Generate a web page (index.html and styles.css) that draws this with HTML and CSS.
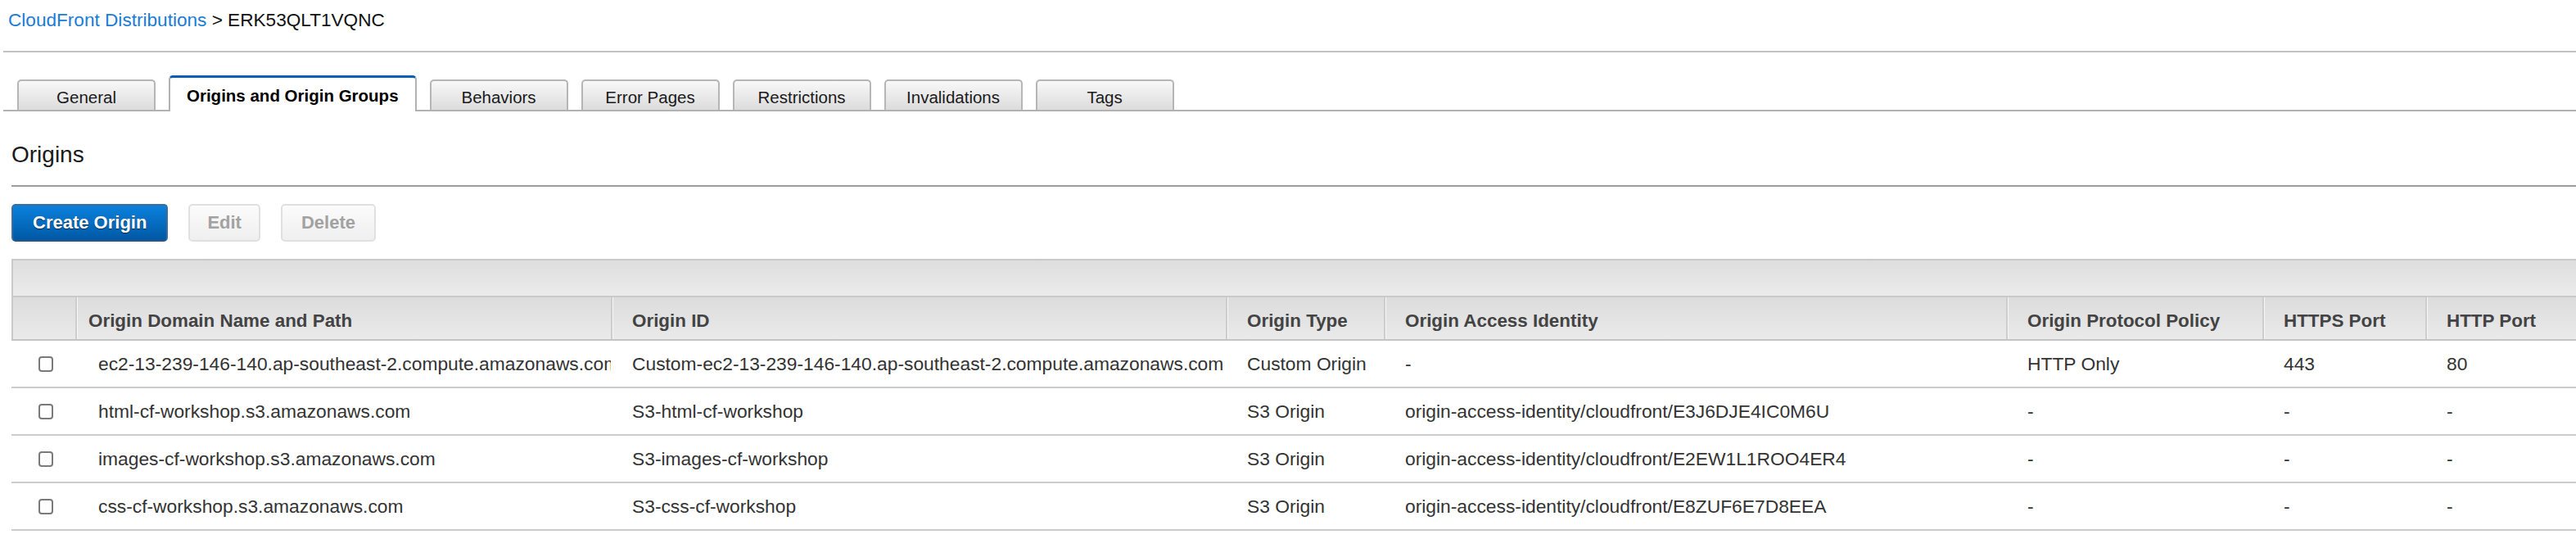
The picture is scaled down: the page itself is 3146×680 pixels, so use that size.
FILE: index.html
```html
<!DOCTYPE html>
<html lang="en">
<head>
<meta charset="utf-8">
<title>CloudFront Distributions - ERK53QLT1VQNC</title>
<link rel="stylesheet" href="styles.css">
</head>
<body>
<div class="page">
  <div class="breadcrumb">
    <a class="crumb-link" href="#">CloudFront Distributions</a><span class="crumb-current"> &gt; ERK53QLT1VQNC</span>
  </div>
  <div class="divider"></div>

  <ul class="tabs">
    <li class="tab">General</li>
    <li class="tab tab-active">Origins and Origin Groups</li>
    <li class="tab">Behaviors</li>
    <li class="tab">Error Pages</li>
    <li class="tab">Restrictions</li>
    <li class="tab">Invalidations</li>
    <li class="tab">Tags</li>
  </ul>

  <section class="content">
    <h2 class="section-title">Origins</h2>

    <div class="toolbar">
      <button class="btn btn-primary">Create Origin</button>
      <button class="btn btn-disabled btn-edit">Edit</button>
      <button class="btn btn-disabled">Delete</button>
    </div>

    <div class="grid">
      <div class="grid-bar"></div>
      <div class="grid-row grid-head">
        <div class="th th-first"></div>
        <div class="th th-domain">Origin Domain Name and Path</div>
        <div class="th">Origin ID</div>
        <div class="th">Origin Type</div>
        <div class="th">Origin Access Identity</div>
        <div class="th">Origin Protocol Policy</div>
        <div class="th">HTTPS Port</div>
        <div class="th">HTTP Port</div>
      </div>

      <div class="grid-row grid-body">
        <div class="td td-check"><span class="checkbox"></span></div>
        <div class="td td-domain">ec2-13-239-146-140.ap-southeast-2.compute.amazonaws.com</div>
        <div class="td">Custom-ec2-13-239-146-140.ap-southeast-2.compute.amazonaws.com</div>
        <div class="td">Custom Origin</div>
        <div class="td">-</div>
        <div class="td">HTTP Only</div>
        <div class="td">443</div>
        <div class="td">80</div>
      </div>

      <div class="grid-row grid-body">
        <div class="td td-check"><span class="checkbox"></span></div>
        <div class="td td-domain">html-cf-workshop.s3.amazonaws.com</div>
        <div class="td">S3-html-cf-workshop</div>
        <div class="td">S3 Origin</div>
        <div class="td">origin-access-identity/cloudfront/E3J6DJE4IC0M6U</div>
        <div class="td">-</div>
        <div class="td">-</div>
        <div class="td">-</div>
      </div>

      <div class="grid-row grid-body">
        <div class="td td-check"><span class="checkbox"></span></div>
        <div class="td td-domain">images-cf-workshop.s3.amazonaws.com</div>
        <div class="td">S3-images-cf-workshop</div>
        <div class="td">S3 Origin</div>
        <div class="td">origin-access-identity/cloudfront/E2EW1L1ROO4ER4</div>
        <div class="td">-</div>
        <div class="td">-</div>
        <div class="td">-</div>
      </div>

      <div class="grid-row grid-body">
        <div class="td td-check"><span class="checkbox"></span></div>
        <div class="td td-domain">css-cf-workshop.s3.amazonaws.com</div>
        <div class="td">S3-css-cf-workshop</div>
        <div class="td">S3 Origin</div>
        <div class="td">origin-access-identity/cloudfront/E8ZUF6E7D8EEA</div>
        <div class="td">-</div>
        <div class="td">-</div>
        <div class="td">-</div>
      </div>
    </div>
  </section>
</div>
</body>
</html>
```

FILE: styles.css
```css
html, body {
  margin: 0;
  padding: 0;
  background: #ffffff;
  overflow: hidden;
}

body {
  font-family: "Liberation Sans", Arial, Helvetica, sans-serif;
  color: #222222;
}

.page {
  padding-left: 4px;
}

/* Breadcrumb */
.breadcrumb {
  padding: 12px 0 0 6px;
  font-size: 22.6px;
  line-height: 26px;
  white-space: nowrap;
}

.crumb-link {
  color: #1b7cd4;
  text-decoration: none;
}

.crumb-current {
  color: #111111;
}

.divider {
  margin-top: 24px;
  height: 0;
  border-top: 2px solid #c2c2c2;
}

/* Tabs */
.tabs {
  list-style: none;
  margin: 28px 0 0 0;
  padding: 0 0 0 17px;
  display: flex;
  align-items: flex-end;
  gap: 16px;
  border-bottom: 2px solid #b2b2b2;
}

.tab {
  box-sizing: border-box;
  min-width: 169px;
  padding: 8px 20px 3px;
  font-size: 20.5px;
  line-height: 24px;
  text-align: center;
  color: #1a1a1a;
  white-space: nowrap;
  border: 2px solid #b6b6b6;
  border-bottom: none;
  border-radius: 5px 5px 0 0;
  background: linear-gradient(#f8f8f8, #dcdcdc);
}

.tab-active {
  padding: 10px 20px 7px;
  margin-bottom: -2px;
  font-weight: bold;
  color: #000000;
  background: #ffffff;
  border-color: #b2b2b2;
  border-top: 3px solid #0a5fb3;
}

/* Content */
.content {
  margin-left: 10px;
}

.section-title {
  margin: 37px 0 0 0;
  padding-bottom: 21px;
  font-size: 28px;
  line-height: 32px;
  font-weight: normal;
  color: #1a1a1a;
  border-bottom: 2px solid #9c9c9c;
}

.toolbar {
  margin-top: 21px;
  display: flex;
  gap: 25px;
}

.btn {
  box-sizing: border-box;
  height: 46px;
  padding: 0 23px;
  font-family: "Liberation Sans", Arial, Helvetica, sans-serif;
  font-size: 22px;
  font-weight: bold;
  border-radius: 5px;
  cursor: default;
}

.btn-primary {
  padding: 0 24px;
  color: #ffffff;
  background: linear-gradient(#0b81dc, #0058a5);
  border: 2px solid #3e6d9a;
  border-bottom-color: #2c5580;
  text-shadow: 0 1px 1px rgba(0, 0, 0, 0.6);
}

.btn-disabled {
  color: #a2a2a2;
  background: linear-gradient(#fbfbfb, #efefef);
  border: 2px solid #e0e0e0;
}

.btn-edit {
  padding: 0 21px;
}

/* Grid table */
.grid {
  margin-top: 21px;
  width: 3148px;
}

.grid-bar {
  box-sizing: border-box;
  height: 47px;
  border: 2px solid #c9c9c9;
  border-right: none;
  background: linear-gradient(#dedede, #ebebeb);
}

.grid-row {
  display: grid;
  grid-template-columns: 78px 654px 751px 193px 760px 313px 199px 200px;
}

.grid-head {
  box-sizing: border-box;
  height: 53px;
  border-bottom: 2px solid #c4c4c4;
  background: linear-gradient(#dcdcdc, #eaeaea);
}

.th {
  display: flex;
  align-items: center;
  padding: 6px 0 0 24px;
  font-size: 22.4px;
  font-weight: bold;
  color: #434343;
  white-space: nowrap;
  overflow: hidden;
  border-left: 2px solid #cdcdcd;
  box-shadow: inset 1px 0 0 #f7f7f7;
}

.th-first {
  border-left-color: #c9c9c9;
  box-shadow: none;
}

.th-domain {
  padding-left: 14px;
}

.grid-body {
  box-sizing: border-box;
  height: 58px;
  border-bottom: 2px solid #cccccc;
}

.td {
  display: flex;
  align-items: center;
  padding-left: 26px;
  font-size: 22.8px;
  color: #333333;
  white-space: nowrap;
  overflow: hidden;
}

.td-domain {
  padding-left: 28px;
}

.td-check {
  padding-left: 33px;
}

.checkbox {
  box-sizing: border-box;
  width: 18px;
  height: 19px;
  border: 2px solid #7a7a7a;
  border-radius: 4px;
  background: #ffffff;
}
```
